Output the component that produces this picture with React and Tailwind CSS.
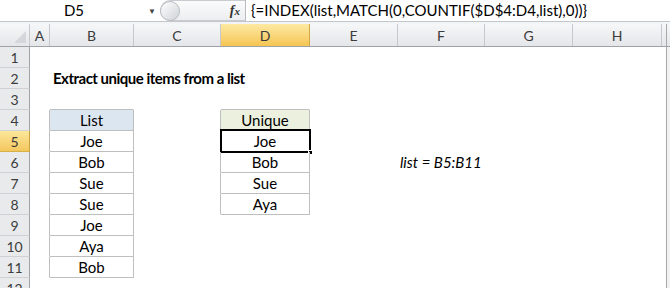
import clsx from "clsx";

const FONT = { fontFamily: "Lato, 'Liberation Sans', sans-serif" };

// column widths (px incl. right gridline)
const COLS = [
  { id: "A", w: "w-[20px]" },
  { id: "B", w: "w-[84px]" },
  { id: "C", w: "w-[87px]" },
  { id: "D", w: "w-[89px]" },
  { id: "E", w: "w-[88px]" },
  { id: "F", w: "w-[87px]" },
  { id: "G", w: "w-[88px]" },
  { id: "H", w: "w-[89px]" },
];

const LIST = ["Joe", "Bob", "Sue", "Sue", "Joe", "Aya", "Bob"];
const UNIQUE = ["Joe", "Bob", "Sue", "Aya"];

function Cell({ w, r, b, bg, children, className }) {
  return (
    <div
      className={clsx(
        "relative h-full shrink-0 border-r border-b flex items-center justify-center whitespace-nowrap text-[15px] text-black",
        w,
        r ? "border-r-[#bfbfbf]" : "border-r-transparent",
        b ? "border-b-[#bfbfbf]" : "border-b-transparent",
        bg,
        className
      )}
    >
      {children}
    </div>
  );
}

function cellProps(row, col) {
  const p = {};
  // left edge of List table sits on A's right gridline
  if (col === "A" && row >= 4 && row <= 11) p.r = true;
  if (col === "B" && row >= 4 && row <= 11) {
    p.r = true;
    p.b = true;
    if (row === 4) {
      p.bg = "bg-[#dce6f1]";
      p.children = "List";
    } else p.children = LIST[row - 5];
  }
  if (col === "B" && row === 3) p.b = true;
  if (col === "C" && row >= 4 && row <= 8) p.r = true;
  if (col === "D" && row === 3) p.b = true;
  if (col === "D" && row >= 4 && row <= 8) {
    p.r = true;
    p.b = true;
    if (row === 4) {
      p.bg = "bg-[#ebf1de]";
      p.children = "Unique";
    } else p.children = UNIQUE[row - 5];
  }
  return p;
}

function SheetRow({ n }) {
  const selected = n === 5;
  return (
    <div className="flex h-[21px]">
      <div
        className={clsx(
          "w-[30px] h-full shrink-0 border-r border-b flex items-center justify-center text-[14px]",
          selected
            ? "bg-gradient-to-b from-[#fce79a] to-[#f4c75c] border-r-[#c9a23c] border-b-[#d6b048] text-[#3a3a3a]"
            : "bg-[#e9eaec] border-r-[#9fa3a8] border-b-[#cfd1d4] text-[#3c3c3c]"
        )}
      >
        {n}
      </div>
      {COLS.map((c) => {
        const p = cellProps(n, c.id);
        if (n === 2 && c.id === "B") {
          return (
            <Cell key={c.id} w={c.w} className="justify-start pl-[3px] font-bold tracking-[-0.5px]">
              Extract unique items from a list
            </Cell>
          );
        }
        if (n === 6 && c.id === "F") {
          return (
            <Cell key={c.id} w={c.w} className="justify-start pl-[2px] italic">
              list = B5:B11
            </Cell>
          );
        }
        return (
          <Cell key={c.id} w={c.w} r={p.r} b={p.b} bg={p.bg}>
            {p.children}
            {n === 5 && c.id === "D" && (
              <>
                <span className="absolute left-[-1px] top-[-2px] right-[-2px] bottom-[-2px] border-2 border-black" />
                <span className="absolute right-[-4px] bottom-[-4px] w-[5px] h-[5px] bg-black border border-white" />
              </>
            )}
          </Cell>
        );
      })}
      <div className="w-[4px] h-full bg-white" />
      <div className="w-[4px] h-full border-l border-[#a8a8a8] bg-[#f2f2f2]" />
    </div>
  );
}

export default function App() {
  const rows = [1, 2, 3, 4, 5, 6, 7, 8, 9, 10, 11, 12];
  return (
    <div className="w-[670px] h-[288px] overflow-hidden bg-white" style={FONT}>
      {/* formula bar */}
      <div className="flex h-[22px] border-b border-[#c3c6ca] bg-white">
        <div className="w-[160px] flex items-center">
          <span className="w-[148px] text-center text-[15px] text-black">D5</span>
          <span className="text-[8px] text-[#444] leading-none">▼</span>
        </div>
        <div className="w-[85px] flex items-center rounded-l-full border border-r-0 border-[#c8ccd1] bg-gradient-to-b from-[#fbfbfc] to-[#eceef0]">
          <div className="w-[20px] h-[20px] -ml-[1px] rounded-full border border-[#b8bcc1] bg-gradient-to-br from-[#ffffff] to-[#cfd3d8]" />
          <span
            className="ml-auto mr-[5px] text-[14px] italic font-bold text-[#333]"
            style={{ fontFamily: "'Liberation Serif', serif" }}
          >
            f<span className="text-[11px]">x</span>
          </span>
        </div>
        <div className="flex-1 flex items-center border-l border-[#b9bdc2] pl-[5px] text-[15px] text-black whitespace-nowrap">
          {"{=INDEX(list,MATCH(0,COUNTIF($D$4:D4,list),0))}"}
        </div>
      </div>
      <div className="h-[2px] bg-[#f3f4f5]" />
      {/* column headers */}
      <div className="flex h-[23px] border-b border-[#9fa3a8] bg-gradient-to-b from-[#f6f7f8] to-[#e4e6e9]">
        <div className="relative w-[30px] h-full shrink-0 border-r border-[#c5c8cc]">
          <svg className="absolute right-[3px] bottom-[3px]" width="12" height="12">
            <polygon points="12,0 12,12 0,12" fill="#d3d6da" />
          </svg>
        </div>
        {COLS.map((c) => (
          <div
            key={c.id}
            className={clsx(
              "h-full shrink-0 border-r flex items-center justify-center text-[14px]",
              c.w,
              c.id === "D"
                ? "bg-gradient-to-b from-[#fde9a2] to-[#f5c550] border-[#d2a943] text-[#3a3a3a]"
                : "border-[#c5c8cc] text-[#3c3c3c]"
            )}
          >
            {c.id}
          </div>
        ))}
        <div className="w-[4px] h-full" />
        <div className="w-[4px] h-full border-l border-[#a8a8a8]" />
      </div>
      {rows.map((n) => (
        <SheetRow key={n} n={n} />
      ))}
    </div>
  );
}
